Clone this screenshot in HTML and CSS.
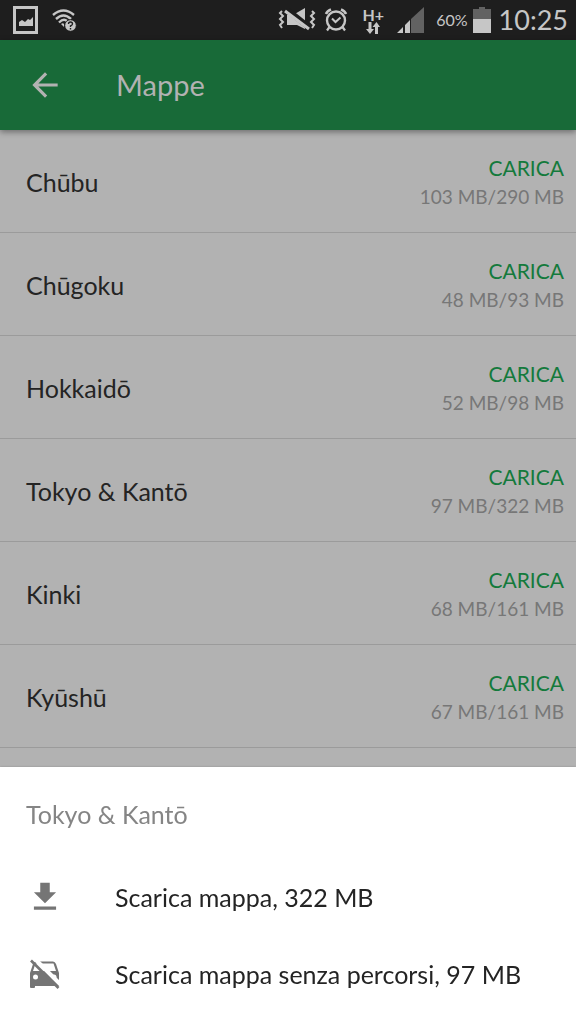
FILE: index.html
```html
<!DOCTYPE html>
<html lang="it">
<head>
<meta charset="utf-8">
<meta name="viewport" content="width=device-width, initial-scale=1">
<title>Mappe</title>
<link rel="stylesheet" href="styles.css">
</head>
<body>
<div class="status-bar">
  <div class="status-group">
    <svg class="icon-picture" width="26" height="28" viewBox="0 0 26 28" aria-hidden="true">
      <path d="M1.500 1.500h22v25h-22z" fill="none" stroke="currentColor" stroke-width="3"/>
      <path d="M6 20v-4l3-2 3 2 3-3 2 1 3-3v9z" fill="currentColor"/>
    </svg>
    <svg width="26" height="24" viewBox="0 0 26 24" aria-hidden="true">
      <g fill="none" stroke="currentColor" stroke-width="2.400">
        <path d="M1 7Q11.500-2 22 7"/><path d="M4 11Q11.500 4 19 11"/><path d="M7 14.500Q11.500 10 15 13"/>
      </g>
      <path d="M9 16q2-1.500 3 0v3z" fill="currentColor"/>
      <circle cx="18.500" cy="17.500" r="5.800" fill="currentColor" stroke="#1e1e1e"/>
      <path d="M16.500 16q0-2 2-2t2 2q0 1-2 2v1M18.500 20v1.500" fill="none" stroke="#1e1e1e" stroke-width="1.400"/>
    </svg>
  </div>
  <div class="status-group status-right">
    <svg width="38" height="24" viewBox="0 0 38 24" aria-hidden="true">
      <path d="M9 7h6l12-7v21l-8-4H9z" fill="currentColor"/>
      <path d="M8 1L32 20" stroke="#1e1e1e" stroke-width="6"/>
      <path d="M7 3L31 21" stroke="currentColor" stroke-width="3"/>
      <path d="M4 3L2 5l3 3-3 3 3 3-3 3 2 3M34 3l2 2-3 3 3 3-3 3 3 3-2 3" fill="none" stroke="currentColor" stroke-width="2"/>
    </svg>
    <svg width="24" height="24" viewBox="0 0 24 24" aria-hidden="true">
      <g fill="none" stroke="currentColor">
        <circle cx="12" cy="12.500" r="9" stroke-width="2.400"/>
        <path d="M8 10.500l3.500 3.500 5-4.500" stroke-width="2"/>
        <path d="M2 6q1-3 5-4.500M22 6q-1-3-5-4.500" stroke-width="2.600"/>
        <path d="M5.500 19L3 22.500M18.500 19l2.500 3.500" stroke-width="2.200"/>
      </g>
    </svg>
    <div class="network">
      <span>H+</span>
      <svg width="16" height="12" viewBox="0 0 16 12" aria-hidden="true">
        <path d="M3.500 0h3v7H9l-4 5-4-5h2.500zM10 12h3V5h2l-3.500-5L7.500 5H10z" fill="currentColor"/>
      </svg>
    </div>
    <svg class="icon-signal" width="27" height="26" viewBox="0 0 27 26" aria-hidden="true">
      <path d="M0 26l6-6v6zM8 26V18l5-5v13z" fill="currentColor"/>
      <path d="M14 26V12L27 0v26z" fill="#626262"/>
    </svg>
    <span class="percent">60%</span>
    <svg class="icon-battery" width="18" height="26" viewBox="0 0 18 26" aria-hidden="true">
      <path d="M0 2h6V0h6v2h6v10H0z" fill="#626262"/><path d="M0 12h18v14H0z" fill="currentColor"/>
    </svg>
    <time class="clock">10:25</time>
  </div>
</div>

<header class="app-bar">
  <button class="back" type="button" aria-label="Indietro">
    <svg width="38" height="38" viewBox="0 0 24 24" aria-hidden="true"><path d="M20 11H7.800l5.600-5.600L12 4l-8 8 8 8 1.400-1.400L7.800 13H20z" fill="currentColor"/></svg>
  </button>
  <h1 class="title">Mappe</h1>
</header>

<main>
  <ul class="regions">
    <li class="region"><span>Chūbu</span><div class="action"><button class="load" type="button">CARICA</button><span class="size">103 MB/290 MB</span></div></li>
    <li class="region"><span>Chūgoku</span><div class="action"><button class="load" type="button">CARICA</button><span class="size">48 MB/93 MB</span></div></li>
    <li class="region"><span>Hokkaidō</span><div class="action"><button class="load" type="button">CARICA</button><span class="size">52 MB/98 MB</span></div></li>
    <li class="region"><span>Tokyo &amp; Kantō</span><div class="action"><button class="load" type="button">CARICA</button><span class="size">97 MB/322 MB</span></div></li>
    <li class="region"><span>Kinki</span><div class="action"><button class="load" type="button">CARICA</button><span class="size">68 MB/161 MB</span></div></li>
    <li class="region"><span>Kyūshū</span><div class="action"><button class="load" type="button">CARICA</button><span class="size">67 MB/161 MB</span></div></li>
  </ul>
</main>

<section class="sheet" role="dialog" aria-labelledby="sheet-title">
  <h2 class="sheet-title" id="sheet-title">Tokyo &amp; Kantō</h2>
  <button class="option" type="button">
    <svg width="38" height="38" viewBox="0 0 24 24" aria-hidden="true"><path d="M19 9h-4V3H9v6H5l7 7zM5 18v2h14v-2z" fill="currentColor"/></svg>
    <span>Scarica mappa, 322 MB</span>
  </button>
  <button class="option" type="button">
    <svg width="38" height="38" viewBox="0 0 38 38" aria-hidden="true">
      <path d="M4 18L7 9q1-2.500 3-2.500h17q2 0 3 2.500l3 9v13H9v1q0 1-1 1H5q-1 0-1-1z" fill="currentColor"/>
      <path d="M7 16l2.500-7.500h18L30 16z" fill="#fff"/>
      <circle cx="9.500" cy="22" r="2.500" fill="#fff"/><circle cx="28" cy="22" r="2.500" fill="#fff"/>
      <path d="M9 4l26 26" stroke="#fff" stroke-width="4"/>
      <path d="M5 5.500L32.500 33" stroke="currentColor" stroke-width="2.600"/>
    </svg>
    <span>Scarica mappa senza percorsi, 97 MB</span>
  </button>
</section>
</body>
</html>
```
FILE: styles.css
```css
* { box-sizing: border-box; }

body {
  margin: 0;
  min-height: 100vh;
  background: #b2b2b2;
  color: #242424;
  font-family: Lato, "Open Sans", sans-serif;
  font-size: 25px;
  line-height: 32px;
}

button {
  padding: 0;
  border: 0;
  background: none;
  color: inherit;
  font: inherit;
  cursor: pointer;
}

svg { display: block; flex: none; }

.status-bar {
  display: flex;
  align-items: center;
  justify-content: space-between;
  height: 40px;
  padding: 0 8px 0 13px;
  background: #1e1e1e;
  color: #c6c6c6;
}

.status-group { display: flex; align-items: center; gap: 13px; }
.status-right { gap: 8px; }

.network {
  display: flex;
  flex-direction: column;
  align-items: center;
  width: 30px;
  padding-left: 4px;
  font-size: 16px;
  font-weight: 700;
  line-height: 15px;
}

.icon-signal { margin: 0 4px 0 3px; }
.percent { font-size: 16px; }
.icon-battery { margin-left: -3px; }
.clock { font-size: 27px; }

.app-bar {
  position: relative;
  display: flex;
  align-items: center;
  gap: 52px;
  height: 90px;
  padding: 0 26px;
  background: #186a38;
  color: #b2b2b2;
  box-shadow: 0 2px 6px rgba(0, 0, 0, 0.4);
}

.title {
  margin: 0;
  font-size: 29px;
  font-weight: 400;
  line-height: 40px;
}

.regions { margin: 0; padding: 0; list-style: none; }

.region {
  display: flex;
  align-items: center;
  justify-content: space-between;
  min-height: 103px;
  padding: 2px 12px 0 26px;
  border-bottom: 1px solid #9b9b9b;
}

.action {
  display: flex;
  flex-direction: column;
  align-items: flex-end;
  line-height: 29px;
}

.load { color: #147a3c; font-size: 21px; }
.size { color: #777; font-size: 19px; }

.sheet {
  position: fixed;
  right: 0;
  bottom: 0;
  left: 0;
  padding: 23px 0 12px;
  background: #fff;
  box-shadow: 0 0 2px rgba(0, 0, 0, 0.2);
}

.sheet-title {
  margin: 0 26px 20px;
  color: #858585;
  font-size: 25px;
  font-weight: 400;
  line-height: 48px;
}

.option {
  display: flex;
  align-items: center;
  gap: 51px;
  width: 100%;
  min-height: 77px;
  padding: 0 26px;
  text-align: left;
}

.option svg { color: #757575; }
```
